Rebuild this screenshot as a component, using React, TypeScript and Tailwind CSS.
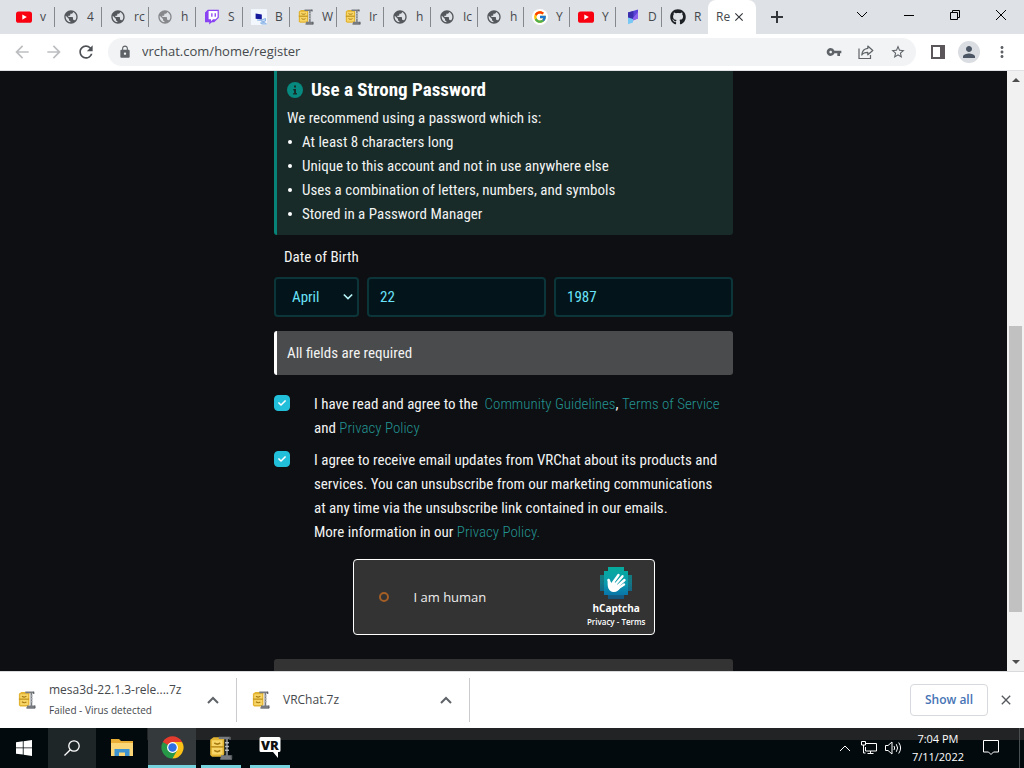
import type { ReactNode } from "react";
import {
  MdArrowBack,
  MdArrowForward,
  MdClose,
  MdLock,
  MdMoreVert,
  MdPerson,
  MdPublic,
  MdRefresh,
  MdStarBorder,
  MdVpnKey,
} from "react-icons/md";
import { FaCheck, FaGithub } from "react-icons/fa";
import { FcGoogle } from "react-icons/fc";

const uiFont = "font-['Open_Sans','Noto_Sans',sans-serif]";
const siteFont = "font-['Roboto_Condensed','Lato',sans-serif]";

function YouTubeIcon() {
  return (
    <svg viewBox="0 0 16 16" className="size-4">
      <rect x="0" y="2.4" width="16" height="11.4" rx="2.6" fill="#f90010" />
      <path d="M6.3 5.5v5.2l4.5-2.6z" fill="#fff" />
    </svg>
  );
}

function GlobeIcon({ faded = false }: { faded?: boolean }) {
  return <MdPublic className={faded ? "size-4 text-[#86888b]" : "size-4 text-[#54585c]"} />;
}

function TwitchIcon() {
  return (
    <svg viewBox="0 0 16 16" className="size-4">
      <path d="M3.8.8h11v8l-4.6 4.4H7.8L5.2 15.600v-2.400H1V3.600z" fill="#8a43f2" />
      <path d="M4.600 2h9v6.200l-2 2H9l-2 2v-2H4.600z" fill="#fff" />
      <path d="M7.200 4.300h1.300v3.400H7.200zM10.600 4.300h1.300v3.400h-1.300z" fill="#8a43f2" />
    </svg>
  );
}

function ComputersIcon() {
  return (
    <svg viewBox="0 0 16 16" className="size-4">
      <rect width="16" height="16" fill="#f2f6fd" />
      <path d="M4.600 4.500l6.200 1v5l-6.200-.8z" fill="#14199c" />
      <path d="M6 11l4 .4M10.500 11l4-1.500v2.500l-3.500 1zM9.500 14l4-.5 2 1.500H11z" stroke="#8ab3e6" strokeWidth="1" fill="#c8dcf5" />
    </svg>
  );
}

function ArchiveIcon({ className }: { className: string }) {
  return (
    <svg viewBox="0 0 16 16" className={className}>
      <path d="M.8 2.500L3 .9h7.200v11.300l-1.500 1.600H2L.8 12.600z" fill="#e3b432" />
      <path d="M2 2.800h7v4H2zM2 7.800h7v4.600H2z" fill="#f7d667" />
      <path d="M3.500 4.600c1.200.9 3 .9 4 0M3.500 9.600c1.200.9 3 .9 4 0" stroke="#a87b12" strokeWidth="1" fill="none" />
      <path d="M.8 7.200h9" stroke="#b58a1c" strokeWidth=".8" />
      <path d="M6.500 1.300h7.700M11.900 1.500v12M8 13.600h7M7.500 15h7.800" stroke="#777b80" strokeWidth="1.500" />
      <path d="M10.700 4.500h2.600M10.700 7h2.600M10.700 9.500h2.600" stroke="#b9bdc1" strokeWidth=".9" />
      <path d="M14 .6v2M15 12.800v2.400" stroke="#55595e" strokeWidth="1" />
    </svg>
  );
}

function DocsIcon() {
  return (
    <svg viewBox="0 0 16 16" className="size-4">
      <path d="M4 3.500L14 .5v9L4 13z" fill="#5b44d8" />
      <path d="M4 3.500L9.500 2v9L4 13z" fill="#3c2fae" />
      <path d="M4 8.500l5 1.500v3.500L4 15.200z" fill="#78c8f6" />
      <path d="M9 9l5-6v6.500l-5 2z" fill="#8d63ee" />
    </svg>
  );
}

function HandIcon() {
  return (
    <svg viewBox="0 0 32 32" className="size-8">
      <defs>
        <linearGradient id="hand-bg" x1="0" y1="0" x2="0" y2="1">
          <stop offset="0" stopColor="#06ab9c" />
          <stop offset=".5" stopColor="#0b9bae" />
          <stop offset="1" stopColor="#0868a8" />
        </linearGradient>
      </defs>
      <path d="M8 0h16v4h4v4h4v16h-4v4h-4v4H8v-4H4v-4H0V8h4V4h4z" fill="url(#hand-bg)" />
      <path d="M0 8h4v16H0zM28 8h4v16h-4zM8 28h16v4H8z" fill="#27323a" opacity=".35" />
      <g stroke="#fff" strokeLinecap="round" fill="none">
        <path d="M12 17l6.500-9" strokeWidth="2.400" />
        <path d="M14 19l8.500-9.800" strokeWidth="2.400" />
        <path d="M16 20.500l8.500-7.500" strokeWidth="2.400" />
        <path d="M17 22l7-4.500" strokeWidth="2.400" />
        <path d="M11 19l-2.400-6" strokeWidth="2.600" />
      </g>
      <path d="M7.800 13l3.600 3.500 3-1.500 6 5.500c-1.500 3-4 4.800-7 4.500-4.500-.6-6.400-4-5.600-12z" fill="#fff" />
    </svg>
  );
}

function ShareIcon() {
  return (
    <svg viewBox="0 0 16 16" className="size-4" fill="none" stroke="#5f6368" strokeWidth="1.200">
      <path d="M1 4.500v10h11.500V11" />
      <path d="M9.800 2l5 4.500-5 4.300V8.300c-3 0-4.800.7-6 2.700.3-3.800 2.300-6.200 6-6.600z" strokeLinejoin="round" />
    </svg>
  );
}

function Chevron({ className, up = false }: { className: string; up?: boolean }) {
  return (
    <svg viewBox="0 0 12 8" className={className} fill="none" stroke="currentColor">
      <path d={up ? "M1 7l5-5 5 5" : "M1 1l5 5 5-5"} />
    </svg>
  );
}

interface TabInfo {
  icon: ReactNode;
  title: string;
  narrow?: boolean;
}

const tabs: TabInfo[] = [
  { icon: <YouTubeIcon />, title: "v" },
  { icon: <GlobeIcon />, title: "4" },
  { icon: <GlobeIcon />, title: "rc" },
  { icon: <GlobeIcon faded />, title: "h" },
  { icon: <TwitchIcon />, title: "S" },
  { icon: <ComputersIcon />, title: "B" },
  { icon: <ArchiveIcon className="size-4" />, title: "W" },
  { icon: <ArchiveIcon className="size-4" />, title: "Ir" },
  { icon: <GlobeIcon />, title: "h" },
  { icon: <GlobeIcon />, title: "Ic" },
  { icon: <GlobeIcon />, title: "h", narrow: true },
  {
    icon: (
      <span className="grid size-4 place-items-center rounded-full bg-white">
        <FcGoogle className="size-3.5" />
      </span>
    ),
    title: "Y",
    narrow: true,
  },
  { icon: <YouTubeIcon />, title: "Y", narrow: true },
  { icon: <DocsIcon />, title: "D", narrow: true },
];

function TabStrip() {
  return (
    <div className="flex h-[34px] items-stretch bg-[#dee1e6] pl-2 text-xs text-[#45484c]">
      {tabs.map((tab, i) => (
        <button
          key={i}
          type="button"
          className={
            tab.narrow
              ? "flex w-[46px] shrink-0 items-center gap-2 pl-2"
              : "flex w-[47px] shrink-0 items-center gap-2 pl-2"
          }
        >
          <span className="shrink-0">{tab.icon}</span>
          <span className="-mr-2 whitespace-nowrap">{tab.title}</span>
          <span className="ml-auto h-5 w-px shrink-0 bg-[#85898e]" />
        </button>
      ))}
      <button type="button" className="flex w-[46px] shrink-0 items-center gap-2 pl-2">
        <FaGithub className="size-4 shrink-0 text-[#1d2024]" />
        <span>R</span>
      </button>
      <div className="flex w-[48px] shrink-0 items-center justify-between rounded-t-lg bg-white pr-2.5 pl-2">
        <span>Re</span>
        <button type="button" aria-label="Close tab">
          <MdClose className="size-3.5 text-[#33363a]" />
        </button>
      </div>
      <button type="button" aria-label="New tab" className="ml-[15px]">
        <svg viewBox="0 0 12 12" className="size-3" stroke="#33363a" strokeWidth="2">
          <path d="M6 0v12M0 6h12" />
        </svg>
      </button>
      <div className="mr-[18px] mb-1 ml-auto flex items-center gap-9 text-black">
        <button type="button" aria-label="Search tabs">
          <Chevron className="h-2 w-3" />
        </button>
        <button type="button" aria-label="Minimize">
          <svg viewBox="0 0 10 10" className="size-2.5" stroke="currentColor">
            <path d="M0 5.500h10" />
          </svg>
        </button>
        <button type="button" aria-label="Restore">
          <svg viewBox="0 0 10 10" className="size-2.5" stroke="currentColor" fill="none">
            <path d="M.5 2.500h7v7h-7zM2.500 2.500v-2h7v7h-2" />
          </svg>
        </button>
        <button type="button" aria-label="Close">
          <svg viewBox="0 0 10 10" className="size-2.5" stroke="currentColor">
            <path d="M0 0l10 10M10 0L0 10" />
          </svg>
        </button>
      </div>
    </div>
  );
}

function Toolbar() {
  return (
    <div className="flex h-[37px] items-center border-b border-[#dfe1e4] bg-white pr-[13px] pl-3 text-[#5f6368]">
      <div className="flex items-center gap-3">
        <button type="button" aria-label="Back">
          <MdArrowBack className="size-5 text-[#bcbec1]" />
        </button>
        <button type="button" aria-label="Forward">
          <MdArrowForward className="size-5 text-[#bcbec1]" />
        </button>
        <button type="button" aria-label="Reload">
          <MdRefresh className="size-5 text-[#4d5156]" />
        </button>
      </div>
      <div className="ml-3 flex h-7 flex-1 items-center rounded-full bg-[#f1f3f4] px-2.5">
        <MdLock className="size-3.5 shrink-0" />
        <input
          aria-label="Address"
          defaultValue="vrchat.com/home/register"
          className="ml-2.5 min-w-0 flex-1 bg-transparent text-[13px] text-[#46494d] outline-none"
        />
        <div className="flex items-center gap-4">
          <button type="button" aria-label="Passwords">
            <MdVpnKey className="size-4" />
          </button>
          <button type="button" aria-label="Share">
            <ShareIcon />
          </button>
          <button type="button" aria-label="Bookmark">
            <MdStarBorder className="size-4" />
          </button>
        </div>
      </div>
      <div className="ml-[15px] flex items-center gap-[13px]">
        <button type="button" aria-label="Side panel">
          <svg viewBox="0 0 14 14" className="size-3.5">
            <path d="M1 1h12v12H1z" fill="none" stroke="#5a5659" strokeWidth="2" />
            <path d="M9 1h4v12H9z" fill="#5a5659" />
          </svg>
        </button>
        <button type="button" aria-label="Profile" className="grid size-[22px] place-items-center rounded-full bg-[#dadde1]">
          <MdPerson className="size-[18px] text-[#4b5563]" />
        </button>
        <button type="button" aria-label="Menu">
          <MdMoreVert className="size-[18px]" />
        </button>
      </div>
    </div>
  );
}

const tips = [
  "At least 8 characters long",
  "Unique to this account and not in use anywhere else",
  "Uses a combination of letters, numbers, and symbols",
  "Stored in a Password Manager",
];

function SiteLink({ children }: { children: ReactNode }) {
  return (
    <a href="#policy" className="font-light text-[#229391]">
      {children}
    </a>
  );
}

function Consent({ id, children }: { id: string; children: ReactNode }) {
  return (
    <div className="flex">
      <span className="mt-[3px] grid size-4 shrink-0">
        <input
          id={id}
          type="checkbox"
          defaultChecked
          className="peer col-start-1 row-start-1 size-4 appearance-none rounded border border-[#22bfda] checked:bg-[#22bfda]"
        />
        <FaCheck className="pointer-events-none invisible col-start-1 row-start-1 size-2 place-self-center text-white peer-checked:visible" />
      </span>
      <label htmlFor={id} className="ml-6 flex-1 whitespace-nowrap">
        {children}
      </label>
    </div>
  );
}

function RegisterForm() {
  const field = "h-10 w-full min-w-0 rounded border-2 border-[#0b3538] bg-[#03151a] text-[#6ae3f9] outline-none";
  return (
    <form className={`mx-auto flex w-full max-w-[459px] flex-col text-[15px] leading-6 text-[#f2f3f3] ${siteFont}`}>
      <section className="rounded-b-[3px] border-l-3 border-[#078277] bg-[#182b28] px-2.5 pt-[5px] pb-[9px]">
        <h2 className="mb-0.5 flex items-center gap-2 text-[19px] leading-7 font-bold text-white">
          <svg viewBox="0 0 16 16" className="size-4">
            <circle cx="8" cy="8" r="8" fill="#07897f" />
            <path d="M7 3.600h2v2H7zM6.300 7H9v4h.9v1.400H6.200V11h.9V8.400h-.8z" fill="#182b28" />
          </svg>
          Use a Strong Password
        </h2>
        <p>We recommend using a password which is:</p>
        <ul>
          {tips.map((tip) => (
            <li key={tip} className="flex items-center gap-2.5">
              <span className="ml-px size-1 rounded-full bg-white" />
              {tip}
            </li>
          ))}
        </ul>
      </section>

      <fieldset className="mt-2.5">
        <legend className="mb-2 px-2.5">Date of Birth</legend>
        <div className="flex gap-2">
          <div className="relative w-[85px] shrink-0">
            <select aria-label="Month" defaultValue="April" className={`${field} appearance-none pl-4`}>
              <option>March</option>
              <option>April</option>
              <option>May</option>
            </select>
            <Chevron className="pointer-events-none absolute top-4 right-1.5 h-2 w-2.5 stroke-2 text-[#b4f0f5]" />
          </div>
          <input aria-label="Day" defaultValue="22" className={`${field} flex-1 px-[11px]`} />
          <input aria-label="Year" defaultValue="1987" className={`${field} flex-1 px-[11px]`} />
        </div>
      </fieldset>

      <p className="mt-3.5 rounded-[3px] border-l-3 border-white bg-[#4a4b4c] p-2.5">All fields are required</p>

      <div className="mt-[17px] flex flex-col gap-2">
        <Consent id="terms">
          I have read and agree to the&nbsp; <SiteLink>Community Guidelines</SiteLink>, <SiteLink>Terms of Service</SiteLink>
          <br />
          and <SiteLink>Privacy Policy</SiteLink>
        </Consent>
        <Consent id="updates">
          I agree to receive email updates from VRChat about its products and
          <br />
          services. You can unsubscribe from our marketing communications
          <br />
          at any time via the unsubscribe link contained in our emails.
          <br />
          More information in our <SiteLink>Privacy Policy.</SiteLink>
        </Consent>
      </div>

      <div className={`mt-[15px] flex h-[76px] w-[302px] items-center self-center rounded border border-white bg-[#333] ${uiFont}`}>
        <button type="button" aria-label="Verify" className="ml-[25px] size-2.5 rounded-full border-2 border-[#a35e26]" />
        <span className="ml-[25px] text-[13px] text-[#eee]">I am human</span>
        <div className="mr-2 ml-auto flex flex-col items-center font-bold text-white">
          <HandIcon />
          <span className="mt-0.5 text-[10px] leading-[14px]">hCaptcha</span>
          <span className="text-[8px] leading-[13px] font-semibold">
            <a href="#privacy">Privacy</a> - <a href="#terms">Terms</a>
          </span>
        </div>
      </div>

      <button type="submit" aria-label="Continue" className="mt-6 h-3 rounded-t-[3px] bg-[#333]" />
    </form>
  );
}

function ScrollBar() {
  return (
    <div className="flex w-[17px] shrink-0 flex-col items-center bg-[#f1f1f1]">
      <svg viewBox="0 0 17 17" className="size-[17px] shrink-0">
        <path d="M5 11l4-4 4 4z" fill="#4d4d4d" />
      </svg>
      <div className="flex-[238]" />
      <div className="w-[13px] flex-[286] bg-[#c1c1c1]" />
      <div className="flex-[42]" />
      <svg viewBox="0 0 17 17" className="size-[17px] shrink-0">
        <path d="M5 6l4 4 4-4z" fill="#4d4d4d" />
      </svg>
    </div>
  );
}

function Download({ name, status }: { name: string; status?: string }) {
  return (
    <div className="flex items-center border-r border-[#c9cbce] pr-[17px] pl-[18px] first:w-[237px] nth-2:w-[233px] nth-2:pl-[15px]">
      <ArchiveIcon className="size-[18px] shrink-0" />
      <div className="ml-[13px] flex-1">
        <p className="text-xs leading-5 text-[#45484c]">{name}</p>
        {status && <p className="text-[10px] leading-5 text-[#45484c]">{status}</p>}
      </div>
      <button type="button" aria-label={`Options for ${name}`}>
        <Chevron up className="h-2 w-3 text-[#5f6368] stroke-2" />
      </button>
    </div>
  );
}

function DownloadBar() {
  return (
    <div className="flex h-[57px] items-stretch border-t border-[#d9dadc] bg-white py-1.5">
      <Download name="mesa3d-22.1.3-rele....7z" status="Failed - Virus detected" />
      <Download name="VRChat.7z" />
      <div className="mr-2.5 ml-auto flex items-center gap-2.5">
        <button type="button" className="h-8 w-[78px] rounded border border-[#d6d9dd] text-xs font-semibold text-[#4674b5]">
          Show all
        </button>
        <button type="button" aria-label="Close downloads">
          <MdClose className="size-4 text-[#55585c]" />
        </button>
      </div>
    </div>
  );
}

function FolderIcon() {
  return (
    <svg viewBox="0 0 22 20" className="h-5 w-[22px]">
      <path d="M0 1h8l2 2h12v15H0z" fill="#e9ae35" />
      <path d="M0 5h22v13H0z" fill="#fbd677" />
      <path d="M3.500 18v-7h15v7h-4.500v-3.500H8V18z" fill="#3d93cf" />
    </svg>
  );
}

function ChromeIcon() {
  return (
    <svg viewBox="0 0 24 24" className="size-[23px]">
      <path d="M12 12L2.040 6.250A11.500 11.500 0 0 1 21.960 6.250z" fill="#e33b2e" />
      <path d="M12 12L2.040 6.250A11.500 11.500 0 0 0 12 23.500z" fill="#279847" />
      <path d="M12 12V23.500A11.500 11.500 0 0 0 21.960 6.250z" fill="#fbc117" />
      <path d="M12 6.250h9.960L16.980 14.900z" fill="#fbc117" />
      <path d="M2.040 6.250L7 14.900 12 12z" fill="#279847" />
      <path d="M7 14.900l5 2.850 4.980-2.850L12 23.500z" fill="#279847" />
      <path d="M12 6.250h9.960A11.500 11.500 0 0 0 2.040 6.250L7 9.200z" fill="#e33b2e" />
      <circle cx="12" cy="12" r="5.700" fill="#fff" />
      <circle cx="12" cy="12" r="4.400" fill="#2f6fe4" />
    </svg>
  );
}

function Taskbar() {
  return (
    <div className="flex h-10 items-stretch bg-[linear-gradient(#222324_12px,#020a0d_12px)] text-white">
      <div className="flex w-[147px] bg-[#020a0d]">
        <button type="button" aria-label="Start" className="grid w-12 place-items-center">
          <svg viewBox="0 0 16 16" className="size-4" fill="#fff">
            <path d="M0 2.300L6.800 1.300v6.200H0zM7.600 1.200L16 0v7.500H7.600zM0 8.300h6.800v6.300L0 13.700zM7.600 8.300H16V16l-8.400-1.200z" />
          </svg>
        </button>
        <button type="button" aria-label="Search" className="grid w-12 place-items-center bg-[#1f2628]">
          <svg viewBox="0 0 16 16" className="size-4" fill="none" stroke="#fff" strokeWidth="1.300">
            <circle cx="10" cy="6" r="5.200" />
            <path d="M6.300 9.700L.5 15.500" />
          </svg>
        </button>
        <button type="button" aria-label="File Explorer" className="grid flex-1 place-items-center">
          <FolderIcon />
        </button>
      </div>
      <button type="button" aria-label="Chrome" className="ml-px grid w-12 place-items-center border-b-3 border-[#76d3dd] bg-[#343a3c] pt-0.5">
        <ChromeIcon />
      </button>
      <button type="button" aria-label="Archiver" className="ml-[5px] grid w-10 place-items-center border-b-3 border-[#76d3dd] pt-0.5">
        <ArchiveIcon className="size-6" />
      </button>
      <button type="button" aria-label="VRChat" className="ml-[9px] grid w-10 place-items-center border-b-3 border-[#76d3dd] pt-0.5">
        <svg viewBox="0 0 22 22" className="size-[22px]">
          <path d="M2 0h18q1.500 0 1.500 1.500v12Q21.500 15 20 15h-1v6l-5-6H2Q.5 15 .5 13.500v-12Q.5 0 2 0z" fill="#fff" />
          <text x="11" y="12.500" textAnchor="middle" fontFamily="Open Sans, sans-serif" fontSize="13" fontWeight="800" fill="#111">
            VR
          </text>
        </svg>
      </button>
      <div className="ml-auto flex items-center">
        <button type="button" aria-label="Hidden icons">
          <Chevron up className="h-2 w-3" />
        </button>
        <svg viewBox="0 0 16 14" className="ml-[10px] h-3.5 w-4" fill="none" stroke="#fff">
          <path d="M5 2.500h10.500v7.500H4.500V6M.5.500h4V4h-4zM2.500 4v8h2M6.500 12.500h6M9.500 10v2.500" />
        </svg>
        <svg viewBox="0 0 18 14" className="ml-2 h-3.5 w-[18px]" fill="none" stroke="#fff">
          <path d="M.5 4.500H3l4-3.500v12L3 9.500H.5zM9 5q1.300 2 0 4M11.300 3.200q2.600 3.800 0 7.600M13.700 1.500q3.800 5.500 0 11" />
        </svg>
        <div className="mx-[9px] text-center text-[11px] leading-[18px]">
          <p>7:04 PM</p>
          <p>7/11/2022</p>
        </div>
        <button type="button" aria-label="Notifications" className="ml-2.5">
          <svg viewBox="0 0 16 16" className="size-4" fill="none" stroke="#fff">
            <path d="M.5.500h15v11.500h-5L8 14.500 5.500 12h-5z" />
          </svg>
        </button>
        <button type="button" aria-label="Show desktop" className="ml-5 w-[5px] self-stretch border-l border-[#4a4f51]" />
      </div>
    </div>
  );
}

export default function App() {
  return (
    <div className={`flex min-h-screen flex-col bg-[#0e0f12] ${uiFont}`}>
      <TabStrip />
      <Toolbar />
      <main className="flex flex-1">
        <div className="min-w-0 flex-1">
          <RegisterForm />
        </div>
        <ScrollBar />
      </main>
      <DownloadBar />
      <Taskbar />
    </div>
  );
}
